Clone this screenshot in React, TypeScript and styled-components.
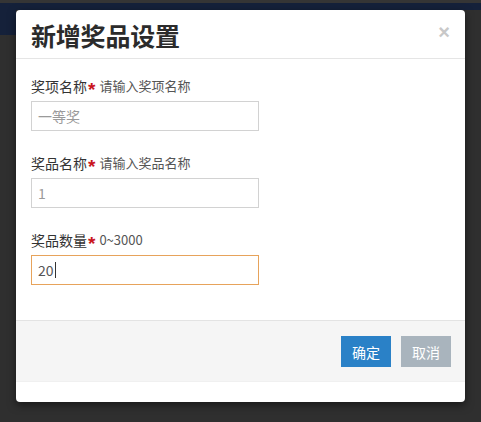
import React from "react";
import styled, { createGlobalStyle } from "styled-components";

const Global = createGlobalStyle`
  html, body { margin: 0; padding: 0; }
  body {
    background: #2e2e2e;
    font-family: "Noto Sans CJK SC", "Noto Sans", sans-serif;
    width: 481px;
    height: 422px;
    overflow: hidden;
  }
`;

const Page = styled.div`
  position: relative;
  width: 481px;
  height: 422px;
  background: #2f2f2f;
  display: flex;
  flex-direction: column;
`;

const TopStrip = styled.div`
  height: 3px;
  background: #353535;
`;

const NavBar = styled.div`
  height: 7px;
  background: #15213a;
`;

const BackRow = styled.div`
  display: flex;
  flex: 1;
`;

const SideNav = styled.div`
  width: 16px;
  height: 25px;
  background: #15213a;
`;

const Overlay = styled.div`
  position: absolute;
  inset: 0;
  display: flex;
  justify-content: flex-start;
  align-items: flex-start;
  padding: 10px 0 0 16px;
`;

const Modal = styled.div`
  width: 449px;
  height: 392px;
  background: #fff;
  border-radius: 4px;
  display: flex;
  flex-direction: column;
  box-shadow: 0 3px 9px rgba(0, 0, 0, 0.5);
`;

const Header = styled.div`
  height: 48px;
  padding: 0 15px 0 15px;
  border-bottom: 1px solid #e5e5e5;
  display: flex;
  align-items: center;
  justify-content: space-between;
`;

const Title = styled.h4`
  margin: 0;
  font-size: 25px;
  font-weight: 700;
  color: #2b2b2b;
  letter-spacing: -0.2px;
  line-height: 30px;
  padding-top: 2px;
`;

const Close = styled.span`
  font-family: "Liberation Sans", Arial, sans-serif;
  font-size: 20px;
  font-weight: 700;
  color: #c8c8c8;
  line-height: 1;
  margin-top: -5px;
`;

const Body = styled.div`
  padding: 17px 15px 0 15px;
  height: 244px;
  display: flex;
  flex-direction: column;
  gap: 22px;
`;

const Group = styled.div`
  display: flex;
  flex-direction: column;
  gap: 5px;
`;

const Label = styled.div`
  height: 20px;
  line-height: 20px;
  font-size: 14px;
  color: #333;
  display: flex;
  align-items: center;
`;

const Star = styled.span`
  color: #c9161d;
  font-family: "Liberation Sans", Arial, sans-serif;
  font-size: 19px;
  font-weight: 700;
  line-height: 20px;
  height: 20px;
  margin: 0 4px 0 1px;
  transform: translateY(4px);
`;

const Hint = styled.span`
  font-size: 13px;
  color: #555;
`;

const Input = styled.div<{ $focus?: boolean; $muted?: boolean }>`
  box-sizing: border-box;
  width: 228px;
  height: 30px;
  border: 1px solid ${(p) => (p.$focus ? "#e7a35b" : "#d2d2d2")};
  padding: 0 6px;
  display: flex;
  align-items: center;
  font-size: 14px;
  color: ${(p) => (p.$muted ? "#9a9a9a" : "#555")};
`;

const Caret = styled.span`
  display: inline-block;
  width: 1px;
  height: 16px;
  background: #333;
  margin-left: 1px;
`;

const Footer = styled.div`
  border-top: 1px solid #e3e3e3;
  border-bottom: 1px solid #f0f0f0;
  background: #f5f5f5;
  height: 60px;
  padding: 0 14px 0 0;
  display: flex;
  align-items: center;
  justify-content: flex-end;
  gap: 10px;
`;

const Button = styled.button<{ $variant: "primary" | "muted" }>`
  height: 31px;
  width: 50px;
  border: none;
  border-radius: 0;
  padding: 0;
  font-family: "Noto Sans CJK SC", sans-serif;
  font-size: 14px;
  color: #fff;
  background: ${(p) => (p.$variant === "primary" ? "#2a81c7" : "#a9b4bd")};
  margin-top: 1px;
`;

export default function App() {
  return (
    <>
      <Global />
      <Page>
        <TopStrip />
        <NavBar />
        <BackRow>
          <SideNav />
        </BackRow>
        <Overlay>
          <Modal>
            <Header>
              <Title>新增奖品设置</Title>
              <Close>×</Close>
            </Header>
            <Body>
              <Group>
                <Label>
                  奖项名称<Star>*</Star>
                  <Hint>请输入奖项名称</Hint>
                </Label>
                <Input $muted>一等奖</Input>
              </Group>
              <Group>
                <Label>
                  奖品名称<Star>*</Star>
                  <Hint>请输入奖品名称</Hint>
                </Label>
                <Input $muted>1</Input>
              </Group>
              <Group>
                <Label>
                  奖品数量<Star>*</Star>
                  <Hint>0~3000</Hint>
                </Label>
                <Input $focus>
                  20
                  <Caret />
                </Input>
              </Group>
            </Body>
            <Footer>
              <Button $variant="primary">确定</Button>
              <Button $variant="muted">取消</Button>
            </Footer>
          </Modal>
        </Overlay>
      </Page>
    </>
  );
}
